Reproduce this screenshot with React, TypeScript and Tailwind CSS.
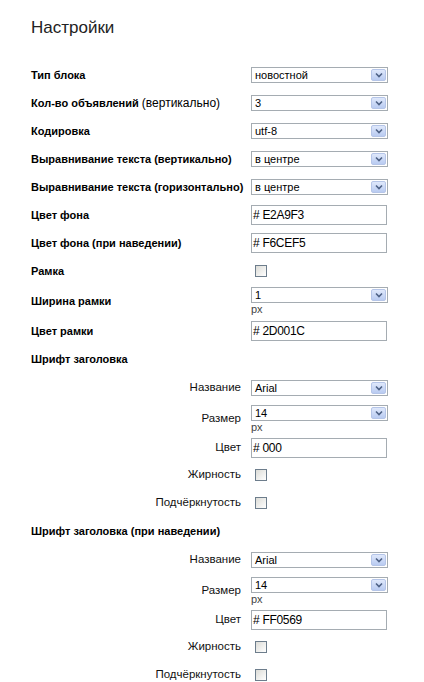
import React from 'react';

const Arrow: React.FC = () => (
    <div className="absolute right-[1px] top-[1px] bottom-[1px] w-[15px] flex items-center justify-center bg-gradient-to-b from-[#dfe8fb] to-[#b9cbf1] border border-[#b5c5e8] rounded-[2px]">
        <svg width="8" height="6" viewBox="0 0 8 6">
            <path d="M1 1.5 L4 4.5 L7 1.5" stroke="#4d6185" strokeWidth="1.6" fill="none" />
        </svg>
    </div>
);

const Select: React.FC<{ value: string; px?: boolean }> = ({ value, px }) => (
    <div className="flex flex-col">
        <div className="relative w-[137px] h-[16px] border border-[#a5acb2] bg-white text-[11px] leading-[14px] pl-[3px] text-black">
            {value}
            <Arrow />
        </div>
        {px && <span className="text-[11px] leading-[11px] text-[#444] mt-[1px]">px</span>}
    </div>
);

const Input: React.FC<{ value: string }> = ({ value }) => (
    <div className="w-[136px] h-[20px] border border-[#a5acb2] bg-white text-[12px] leading-[18px] pl-[1px] tracking-[-0.3px] text-black">
        {value}
    </div>
);

const Checkbox: React.FC = () => (
    <div className="ml-[4px] w-[12px] h-[12px] border border-[#6d7d8c] bg-gradient-to-br from-[#dcdcd7] to-white" />
);

const Row: React.FC<{ label: React.ReactNode; h: string; children?: React.ReactNode }> = ({ label, h, children }) => (
    <div className={`grid grid-cols-[220px_140px] items-center ${h}`}>
        <div className="font-bold text-[11px] text-black">{label}</div>
        <div>{children}</div>
    </div>
);

const SubRow: React.FC<{ label: string; h: string; children?: React.ReactNode }> = ({ label, h, children }) => (
    <div className={`grid grid-cols-[210px_140px] gap-x-[10px] items-center ${h}`}>
        <div className="text-right text-[11.5px] text-[#111]">{label}</div>
        <div>{children}</div>
    </div>
);

const FontGroup: React.FC<{ title: string; color: string }> = ({ title, color }) => (
    <>
        <div className="h-[28px] flex items-center font-bold text-[11px] text-black">{title}</div>
        <SubRow label="Название" h="h-[30px]"><Select value="Arial" /></SubRow>
        <SubRow label="Размер" h="h-[32px]"><Select value="14" px /></SubRow>
        <SubRow label="Цвет" h="h-[26px]"><Input value={`# ${color}`} /></SubRow>
        <SubRow label="Жирность" h="h-[28px]"><Checkbox /></SubRow>
        <SubRow label="Подчёркнутость" h="h-[28px]"><Checkbox /></SubRow>
    </>
);

export default function App() {
    return (
        <div className="min-h-[682px] bg-white pl-[31px] pt-[18px] [font-family:'Liberation_Sans',Arial,sans-serif]">
            <h1 className="text-[17px] leading-[20px] text-[#222] mb-[23px]">Настройки</h1>
            <Row label="Тип блока" h="h-[28px]"><Select value="новостной" /></Row>
            <Row label={<>Кол-во объявлений <span className="font-normal text-[12px]">(вертикально)</span></>} h="h-[28px]"><Select value="3" /></Row>
            <Row label="Кодировка" h="h-[28px]"><Select value="utf-8" /></Row>
            <Row label="Выравнивание текста (вертикально)" h="h-[28px]"><Select value="в центре" /></Row>
            <Row label="Выравнивание текста (горизонтально)" h="h-[28px]"><Select value="в центре" /></Row>
            <Row label="Цвет фона" h="h-[28px]"><Input value="# E2A9F3" /></Row>
            <Row label="Цвет фона (при наведении)" h="h-[28px]"><Input value="# F6CEF5" /></Row>
            <Row label="Рамка" h="h-[28px]"><Checkbox /></Row>
            <Row label="Ширина рамки" h="h-[32px]"><Select value="1" px /></Row>
            <Row label="Цвет рамки" h="h-[28px]"><Input value="# 2D001C" /></Row>
            <FontGroup title="Шрифт заголовка" color="000" />
            <FontGroup title="Шрифт заголовка (при наведении)" color="FF0569" />
        </div>
    );
}
